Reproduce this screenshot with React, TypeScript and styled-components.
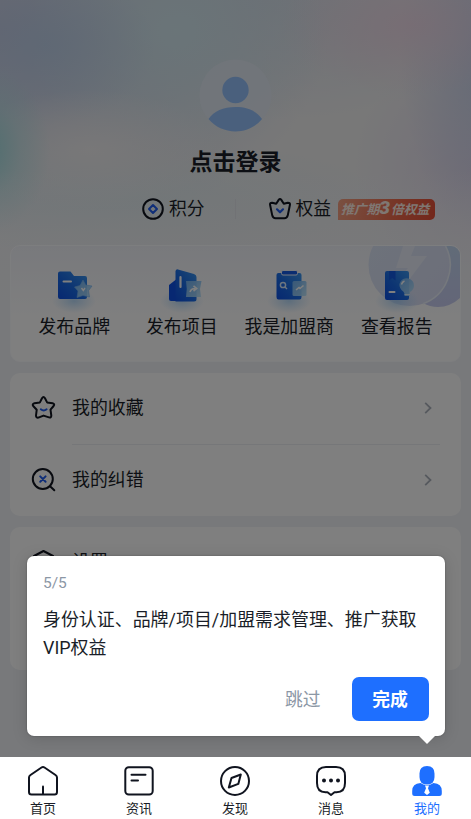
import React from "react";
import styled, { createGlobalStyle, css } from "styled-components";

const GlobalStyle = createGlobalStyle`
  * { box-sizing: border-box; }
  body {
    margin: 0;
    overflow: hidden;
    font-family: Roboto, "Noto Sans CJK SC", sans-serif;
    color: #1a1e28;
  }
  svg { display: block; flex: none; }
`;

const Screen = styled.div`
  position: relative;
  width: 471px;
  height: 819px;
  display: flex;
  flex-direction: column;
  overflow: hidden;
`;

const Page = styled.main`
  height: 757px;
  flex: none;
  overflow: hidden;
  display: flex;
  flex-direction: column;
  padding: 0 10px;
  background:
    linear-gradient(180deg, rgba(241, 243, 247, 0) 170px, #f1f3f7 330px),
    radial-gradient(ellipse 65px 85px at -15px 150px, rgba(150, 220, 222, 0.9), rgba(170, 226, 228, 0.4) 55%, rgba(190, 230, 232, 0)),
    radial-gradient(ellipse 130px 60px at 90px 150px, rgba(244, 242, 242, 0.85), rgba(244, 242, 242, 0)),
    radial-gradient(ellipse 110px 80px at 45px 45px, rgba(186, 208, 234, 0.75), rgba(186, 208, 234, 0)),
    radial-gradient(ellipse 150px 130px at 175px 30px, rgba(212, 236, 242, 0.85), rgba(212, 236, 242, 0)),
    radial-gradient(ellipse 130px 70px at 410px 25px, rgba(244, 212, 230, 0.65), rgba(244, 212, 230, 0)),
    radial-gradient(ellipse 90px 190px at 490px 50px, rgba(196, 208, 236, 0.9), rgba(196, 208, 236, 0)),
    radial-gradient(ellipse 120px 130px at 475px 170px, rgba(228, 218, 238, 0.9), rgba(228, 218, 238, 0)),
    radial-gradient(ellipse 260px 60px at 130px 200px, rgba(222, 236, 240, 0.8), rgba(222, 236, 240, 0)),
    radial-gradient(ellipse 330px 210px at 0 30px, #c8cce4, rgba(206, 214, 232, 0.75) 45%, rgba(224, 230, 238, 0)),
    radial-gradient(ellipse 260px 120px at 260px 0, rgba(214, 222, 234, 0.8), rgba(214, 222, 234, 0)),
    #f0f0f1;
`;

const Profile = styled.section`
  height: 245px;
  flex: none;
  display: flex;
  flex-direction: column;
  align-items: center;
  padding-top: 59px;
`;

const UserName = styled.h1`
  margin: 14px 0 0;
  font-size: 23px;
  line-height: 34px;
  font-weight: 700;
`;

const Stats = styled.div`
  align-self: stretch;
  display: flex;
  align-items: center;
  height: 22px;
  margin-top: 18px;
  padding-left: 132px;
  font-size: 17.8px;
`;

const Stat = styled.div`
  display: flex;
  align-items: center;
  gap: 5px;
  line-height: 22px;
`;

const StatDivider = styled.i`
  width: 1px;
  height: 20px;
  margin: 0 33px 0 30px;
  background: #e2e4ea;
`;

const Badge = styled.span`
  display: flex;
  align-items: center;
  justify-content: center;
  width: 97px;
  height: 21px;
  margin-left: 7px;
  padding: 0 3px 2px 0;
  border-radius: 5px 5px 5px 0;
  background: linear-gradient(100deg, #f4a183, #ee6a4c 60%, #e64f38);
  color: #ffeee5;
  font-size: 12.8px;
  font-weight: 700;
  font-style: italic;
  white-space: nowrap;
  b { font-size: 19px; line-height: 18px; margin-right: 1px; }
`;

const Card = styled.section<{ $height: number; $tinted?: boolean }>`
  position: relative;
  flex: none;
  height: ${(p) => p.$height}px;
  margin: 0 0 11px;
  border-radius: 10px;
  background: #fff;
  overflow: hidden;
  ${(p) =>
    p.$tinted &&
    css`
      border: 1.5px solid #fbfcff;
      background: linear-gradient(180deg, #f1f3f9, #fff 65%);
    `}
`;

const CardDecor = styled.svg`
  position: absolute;
  right: 0;
  top: 0;
`;

const QuickGrid = styled.div`
  position: relative;
  display: grid;
  grid-template-columns: repeat(4, 107.5px);
  padding: 19px 0 0 9.5px;
`;

const QuickItem = styled.div`
  display: flex;
  flex-direction: column;
  align-items: center;
  font-size: 17.9px;
  line-height: 24px;
  white-space: nowrap;
  svg { margin-bottom: 2px; }
`;

const Row = styled.div`
  height: 72px;
  display: flex;
  align-items: center;
  padding: 0 0 0 21px;
  font-size: 17.9px;
  > svg { margin-bottom: 3px; }
`;

const RowBody = styled.div<{ $line?: boolean }>`
  flex: 1;
  height: 72px;
  margin: 0 21px 0 16px;
  display: flex;
  align-items: center;
  justify-content: space-between;
  padding: 0 8px 2px 0;
  border-bottom: 1px solid ${(p) => (p.$line ? "#eceef2" : "transparent")};
  span { margin-bottom: 3px; }
`;

const Overlay = styled.div`
  position: absolute;
  inset: 0 0 62px;
  background: rgba(0, 0, 0, 0.5);
`;

const Guide = styled.div`
  position: absolute;
  left: 27px;
  top: 556px;
  width: 417.5px;
  height: 180px;
  padding: 16px;
  border-radius: 7px;
  background: #fff;
  box-shadow: 0 2px 16px rgba(0, 0, 0, 0.14), 0 0 2px rgba(0, 0, 0, 0.3);
  &::after {
    content: "";
    position: absolute;
    top: 100%;
    right: 10px;
    border: 8px solid transparent;
    border-top-color: #fff;
    border-bottom: 0;
  }
`;

const Step = styled.div`
  color: #8c97a5;
  font-size: 15.5px;
  line-height: 22px;
`;

const GuideText = styled.p`
  margin: 12px 0 0;
  font-size: 17.95px;
  line-height: 28px;
  white-space: nowrap;
`;

const Actions = styled.div`
  display: flex;
  justify-content: flex-end;
  align-items: center;
  gap: 31px;
  margin-top: 15px;
`;

const Skip = styled.button`
  padding: 0 0 3px;
  border: 0;
  background: none;
  color: #8c97a5;
  font: inherit;
  font-size: 17.8px;
`;

const Done = styled.button`
  width: 77px;
  height: 44px;
  padding: 0 0 2px;
  border: 0;
  border-radius: 7px;
  background: #1e6fff;
  color: #fff;
  font: inherit;
  font-size: 17.8px;
  font-weight: 700;
`;

const TabBar = styled.nav`
  height: 62px;
  display: flex;
  justify-content: space-between;
  padding: 8px 14px 0 13px;
  background: #fff;
`;

const Tab = styled.div<{ $active?: boolean }>`
  width: 60px;
  display: flex;
  flex-direction: column;
  align-items: center;
  gap: 3px;
  font-size: 13px;
  line-height: 18px;
  color: ${(p) => (p.$active ? "#1e6fff" : "#1a1e28")};
`;

const line = {
  fill: "none",
  stroke: "#10141f",
  strokeWidth: 2,
  strokeLinecap: "round",
  strokeLinejoin: "round",
} as const;
const blue = { ...line, stroke: "#1e5cf0" } as const;

const Avatar = () => (
  <svg width="73" height="73" viewBox="0 0 73 73">
    <circle cx="36.5" cy="36.5" r="36" fill="#e4ebf5" opacity=".8" />
    <circle cx="36.5" cy="31" r="13.2" fill="#94c0fb" />
    <path d="M9.5 60C15 52 24 48 36.5 48S57 52 63 60C56.500 68 47 72.400 36.500 72.400S16 68 9.500 60Z" fill="#94c0fb" />
  </svg>
);

const PointsIcon = () => (
  <svg width="22" height="22" viewBox="0 0 22 22">
    <circle cx="11" cy="11" r="9.8" {...line} />
    <path d="M11 7L15 11L11 15L7 11Z" {...blue} />
  </svg>
);

const CrownIcon = () => (
  <svg width="22" height="22" viewBox="0 0 22 22">
    <path d="M7.200 5.800L9.700 1.900Q11 .2 12.300 1.900L14.800 5.800L18.800 4.700Q21.400 4.600 20.900 7L18.700 17.600Q18 20.300 15.500 20.300H6.500Q4 20.300 3.300 17.600L1.100 7Q.6 4.600 3.200 4.700Z" {...line} />
    <path d="M8 11.300L11 14.300L14 11.300" {...blue} strokeWidth="2.2" />
  </svg>
);

const BlankDefs = styled.svg`
  position: absolute;
`;

const Defs = () => (
  <BlankDefs width="0" height="0">
    <defs>
      <linearGradient id="solid" x1="1" y1="0" x2="0" y2="1">
        <stop offset="0" stopColor="#3d97ee" />
        <stop offset=".55" stopColor="#1a6be6" />
        <stop offset="1" stopColor="#0e50e4" />
      </linearGradient>
      <linearGradient id="glass" x1="0" y1="0" x2="1" y2="1">
        <stop offset="0" stopColor="#72b2f2" />
        <stop offset="1" stopColor="#b4e0f9" stopOpacity=".85" />
      </linearGradient>
      <radialGradient id="glow">
        <stop offset="0" stopColor="#8cc4f5" stopOpacity=".6" />
        <stop offset="1" stopColor="#a0d0fa" stopOpacity="0" />
      </radialGradient>
    </defs>
  </BlankDefs>
);

const Glow = () => <ellipse cx="22" cy="36" rx="22" ry="12" fill="url(#glow)" />;

const BrandIcon = () => (
  <svg width="44" height="48" viewBox="0 0 44 48">
    <Glow />
    <path d="M6 8.500Q6 6.500 8 6.500H18.500L22 11H33Q35 11 35 13V32Q35 34 33 34H8Q6 34 6 32Z" fill="url(#solid)" />
    <path d="M11.500 16.500H19" stroke="#fff" strokeWidth="2" strokeLinecap="round" />
    <path d="M31 15L33.800 20L40 21L36.500 25.700L37.500 32L31 30.500L25 32.500L26 26L22.500 22L28 20.500Z" fill="url(#glass)" stroke="#79b6f2" strokeWidth=".6" strokeLinejoin="round" />
    <path d="M29.500 23L31.300 25.500L33 23" fill="none" stroke="#fff" strokeWidth="1.400" />
  </svg>
);

const ProjectIcon = () => (
  <svg width="44" height="48" viewBox="0 0 44 48">
    <Glow />
    <path d="M9 20L18 13V36H11Q9 36 9 34Z" fill="#0e50e4" />
    <path d="M15.500 6Q16 4 18 4.400L34 9Q36.500 10 36.500 12V34Q36.500 36.500 34 36.500H15.500Z" fill="url(#solid)" />
    <path d="M20.500 12V22" stroke="#fff" strokeWidth="2.200" strokeLinecap="round" />
    <path d="M26 16H41.500L40 24L41 32H26Q27.500 24 26 16Z" fill="url(#glass)" />
    <path d="M30 27Q31 23.500 35 23.500M33.500 20.800L36.700 23.500L33.500 26" fill="none" stroke="#fff" strokeWidth="1.600" />
  </svg>
);

const MerchantIcon = () => (
  <svg width="44" height="48" viewBox="0 0 44 48">
    <Glow />
    <path d="M9.500 10Q9.500 8 11.500 8H32.500Q34.500 8 34.500 10V32Q34.500 34.500 32.500 34.500H11.500Q9.500 34.500 9.500 32Z" fill="url(#solid)" />
    <rect x="14.500" y="5.500" width="16" height="4.500" rx="1.500" fill="#155be3" stroke="#eef5ff" strokeWidth="1" />
    <circle cx="16" cy="20" r="2.600" fill="none" stroke="#d8ebff" strokeWidth="1.500" />
    <path d="M18 22L20 24" stroke="#d8ebff" strokeWidth="1.500" />
    <rect x="25.500" y="16" width="14" height="15" rx="1.500" fill="url(#glass)" />
    <path d="M29 25L32 22.500L33 23.500L36.500 20.500" fill="none" stroke="#fff" strokeWidth="1.600" />
  </svg>
);

const ReportIcon = () => (
  <svg width="44" height="48" viewBox="0 0 44 48">
    <Glow />
    <rect x="10" y="6" width="24" height="29" rx="2" fill="url(#solid)" />
    <path d="M14 6H20.500V15.500L17.200 13L14 15.500Z" fill="#155be3" />
    <path d="M14.500 27H19.500" stroke="#fff" strokeWidth="2" strokeLinecap="round" />
    <path d="M29.500 29Q29.500 27 26.500 25Q23 20.500 25.500 16.500Q28.500 12.500 33.500 13.500Q39.500 15.500 39 21Q38.500 25 35 27V31H29.500Z" fill="url(#glass)" />
    <path d="M26.500 19.500Q27 17 29.500 16" fill="none" stroke="#fff" strokeWidth="1.400" />
    <path d="M29.500 29.500H35" stroke="#d8edff" strokeWidth="1" />
  </svg>
);

const StarIcon = () => (
  <svg width="25" height="25" viewBox="0 0 25 25">
    <path d="M11 3.300Q12.500 .8 14 3.300L16.100 7.400L21.600 8.300Q24.200 9 22.600 11L19.500 14.700L20.300 20.500Q20.300 23 18 22.400L12.500 20.600L7.400 22.600Q5 23 5 20.500L5.700 14.800L2.200 11Q.8 9 3.400 8.300L8.900 7.400Z" {...line} />
    <path d="M9.800 14.300Q12.700 16.600 15.600 14.300" {...blue} />
  </svg>
);

const ErrorIcon = () => (
  <svg width="25" height="25" viewBox="0 0 25 25">
    <circle cx="11.800" cy="12" r="10" {...line} />
    <path d="M19.300 19.400L23.300 23.200" {...line} />
    <path d="M9.200 9.400L14.600 14.800M14.600 9.400L9.200 14.800" {...blue} />
  </svg>
);

const SettingsIcon = () => (
  <svg width="25" height="25" viewBox="0 0 25 25">
    <path d="M12.500 2L22 7V18L12.500 23.500L3 18V7Z" {...line} />
    <circle cx="12.500" cy="12.500" r="3" {...blue} />
  </svg>
);

const Chevron = () => (
  <svg width="8" height="12" viewBox="0 0 8 12">
    <path d="M1.200 .8L6.500 6L1.200 11.200" fill="none" stroke="#adb2bd" strokeWidth="1.800" />
  </svg>
);

const HomeIcon = () => (
  <svg width="32" height="32" viewBox="0 0 32 32">
    <path d="M2 12.500Q2 11 3.500 10L14.500 2.500Q16 1.500 17.500 2.500L28.500 10Q30 11 30 12.500V27Q30 29.500 27.500 29.500H4.500Q2 29.500 2 27Z" {...line} />
    <path d="M16 21.500V29" {...line} />
  </svg>
);

const NewsIcon = () => (
  <svg width="32" height="32" viewBox="0 0 32 32">
    <rect x="2.300" y="2.300" width="27.400" height="27.200" rx="3.500" {...line} />
    <path d="M8.500 9.800H22.500M8.500 15.500H15" {...line} />
  </svg>
);

const DiscoverIcon = () => (
  <svg width="32" height="32" viewBox="0 0 32 32">
    <circle cx="16" cy="16" r="14" {...line} />
    <path d="M21.800 9.500L19.300 18.900L9.800 22.500L12.500 13Z" {...line} />
  </svg>
);

const MessageIcon = () => (
  <svg width="32" height="32" viewBox="0 0 32 32">
    <path d="M11 2H21Q30 2 30 11V18Q30 27.200 21.500 27.200H19.500L16 30L12.500 27.200H10.500Q2 27.200 2 18V11Q2 2 11 2Z" {...line} />
    <circle cx="9" cy="15.500" r="2" fill="#10141f" />
    <circle cx="16" cy="15.500" r="2" fill="#10141f" />
    <circle cx="23" cy="15.500" r="2" fill="#10141f" />
  </svg>
);

const MineIcon = () => (
  <svg width="32" height="32" viewBox="0 0 32 32">
    <path d="M16 1Q23.500 1 23.500 8.500V12Q23.500 19.500 16 19.500T8.500 12V8.500Q8.500 1 16 1Z" fill="#1e6fff" />
    <path d="M9.500 18Q12 20 16 20T22.500 18Q30.800 18.500 30.800 26V28.500Q30.800 31 28.300 31H3.700Q1.200 31 1.200 28.500V26Q1.200 18.500 9.500 18Z" fill="#1e6fff" />
    <path d="M14 20.500H18L17 23.300L18.800 27.800L16 30L13.200 27.800L15 23.300Z" fill="#fff" />
  </svg>
);

const quickItems = [
  { label: "发布品牌", Icon: BrandIcon },
  { label: "发布项目", Icon: ProjectIcon },
  { label: "我是加盟商", Icon: MerchantIcon },
  { label: "查看报告", Icon: ReportIcon },
];

const tabs = [
  { label: "首页", Icon: HomeIcon },
  { label: "资讯", Icon: NewsIcon },
  { label: "发现", Icon: DiscoverIcon },
  { label: "消息", Icon: MessageIcon },
  { label: "我的", Icon: MineIcon, active: true },
];

const MenuRow = ({ icon, label, divided }: { icon: React.ReactNode; label: string; divided?: boolean }) => (
  <Row>
    {icon}
    <RowBody $line={divided}>
      <span>{label}</span>
      <Chevron />
    </RowBody>
  </Row>
);

export default function App() {
  return (
    <Screen>
      <GlobalStyle />
      <Page>
        <Profile>
          <Avatar />
          <UserName>点击登录</UserName>
          <Stats>
            <Stat>
              <PointsIcon />
              积分
            </Stat>
            <StatDivider />
            <Stat>
              <CrownIcon />
              权益
            </Stat>
            <Badge>
              推广期<b>3</b>倍权益
            </Badge>
          </Stats>
        </Profile>

        <Card $height={117} $tinted>
          <CardDecor width="92" height="62" viewBox="0 0 92 62">
            <defs>
              <linearGradient id="disc" x1="0" y1="0" x2="1" y2="1">
                <stop offset="0" stopColor="#dce6f6" />
                <stop offset="1" stopColor="#d9ddf4" />
              </linearGradient>
              <linearGradient id="discBack" x1="0" y1="0" x2="0" y2="1">
                <stop offset="0" stopColor="#c3d7f0" />
                <stop offset="1" stopColor="#c8ccf0" />
              </linearGradient>
            </defs>
            <path d="M62 0H92V52Q82 61 70 61Q62 61 55 57Z" fill="url(#discBack)" />
            <circle cx="41.500" cy="19" r="41" fill="url(#disc)" />
            <path d="M77.500 0A41 41 0 0 1 55 57.700" fill="none" stroke="#eaf0fa" strokeWidth="1.600" />
            <path d="M35 0H47L43 10H59L34 43Q32 30 40 22H28Z" fill="#e8edf8" />
          </CardDecor>
          <Defs />
          <QuickGrid>
            {quickItems.map(({ label, Icon }) => (
              <QuickItem key={label}>
                <Icon />
                {label}
              </QuickItem>
            ))}
          </QuickGrid>
        </Card>

        <Card $height={143}>
          <MenuRow icon={<StarIcon />} label="我的收藏" divided />
          <MenuRow icon={<ErrorIcon />} label="我的纠错" />
        </Card>

        <Card $height={143}>
          <MenuRow icon={<SettingsIcon />} label="设置" />
        </Card>
      </Page>

      <TabBar>
        {tabs.map(({ label, Icon, active }) => (
          <Tab key={label} $active={active}>
            <Icon />
            {label}
          </Tab>
        ))}
      </TabBar>

      <Overlay />
      <Guide>
        <Step>5/5</Step>
        <GuideText>
          身份认证、品牌/项目/加盟需求管理、推广获取
          <br />
          VIP权益
        </GuideText>
        <Actions>
          <Skip>跳过</Skip>
          <Done>完成</Done>
        </Actions>
      </Guide>
    </Screen>
  );
}
